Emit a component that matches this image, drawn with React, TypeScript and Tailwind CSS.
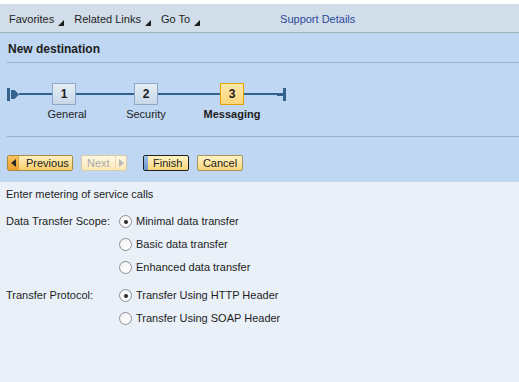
import React from "react";

const font = { fontFamily: '"Liberation Sans", Arial, sans-serif' };

const MenuItem = ({ label }: { label: string }) => (
  <span className="flex items-start text-[11px] leading-[14px] text-[#1d1d1d]">
    {label}
    <svg width="6" height="6" viewBox="0 0 6 6" className="ml-[4px] mt-[8px]">
      <polygon points="6,0 6,6 0,6" fill="#1d1d1d" />
    </svg>
  </span>
);

const Step = ({ n, label, active, shift }: { n: number; label: string; active?: boolean; shift?: string }) => (
  <div className="relative shrink-0">
    <div
      className={
        active
          ? "w-[24px] h-[22px] border border-[#e2a400] bg-gradient-to-b from-[#fce7a8] to-[#f9d57a] flex items-center justify-center text-[12px] font-bold text-[#1d1d1d]"
          : "w-[24px] h-[22px] border border-[#8ea9c6] bg-gradient-to-b from-[#e6eef6] to-[#c8d8e9] flex items-center justify-center text-[12px] font-bold text-[#1d1d1d]"
      }
    >
      {n}
    </div>
    <div
      className={
        "absolute top-full left-1/2 -translate-x-1/2 mt-[2px] whitespace-nowrap text-[11px] leading-[14px] text-[#1d1d1d] " +
        (shift ?? "") +
        (active ? " font-bold" : "")
      }
    >
      {label}
    </div>
  </div>
);

const Line = ({ w }: { w: string }) => <div className={`h-[2px] bg-[#33628f] ${w}`} />;

const Radio = ({ label, checked }: { label: string; checked?: boolean }) => (
  <div className="h-[23px] flex items-center">
    <span className="w-[13px] h-[13px] rounded-full border border-[#8b9097] bg-gradient-to-br from-[#f2f2f2] to-[#ffffff] flex items-center justify-center">
      {checked && <span className="w-[4px] h-[4px] rounded-full bg-[#2a2a2a]" />}
    </span>
    <span className="ml-[4px] text-[11px] text-[#1d1d1d]">{label}</span>
  </div>
);

export default function App() {
  return (
    <div className="w-[519px] h-[382px] overflow-hidden bg-[#e9f0f8]" style={font}>
      <div className="h-[4px] bg-white" />
      {/* toolbar */}
      <div className="h-[29px] bg-[#d1dde8] border-b border-[#a3b1bf] flex pl-[9px] pt-[8px]">
        <div className="flex gap-[10px]">
          <MenuItem label="Favorites" />
          <MenuItem label="Related Links" />
          <MenuItem label="Go To" />
        </div>
        <span className="ml-[80px] text-[11px] leading-[14px] text-[#2b4a9c]">Support Details</span>
      </div>

      {/* wizard header */}
      <div className="bg-[#bfd7f3]">
        <div className="ml-[7px] h-[30px] border-b border-[#96aecb] flex items-center pl-[1px] pt-[2px]">
          <span className="text-[12px] font-bold text-[#1d1d1d]">New destination</span>
        </div>

        <div className="ml-[7px] h-[74px] border-b border-[#96aecb] pt-[20px]">
          <div className="flex items-center h-[22px]">
            <svg width="12" height="13" viewBox="0 0 12 13" className="shrink-0">
              <rect x="0" y="0" width="3" height="13" fill="#33628f" />
              <polygon points="4,2 7.5,2 12,6.5 7.5,11 4,11" fill="#33628f" />
            </svg>
            <Line w="w-[33px]" />
            <Step n={1} label="General" shift="ml-[3px]" />
            <Line w="w-[58px]" />
            <Step n={2} label="Security" />
            <Line w="w-[62px]" />
            <Step n={3} label="Messaging" active />
            <Line w="w-[34px]" />
            <svg width="9" height="13" viewBox="0 0 9 13" className="-ml-[1px] shrink-0">
              <rect x="0" y="5" width="7" height="3" fill="#33628f" />
              <rect x="6" y="0" width="3" height="13" fill="#33628f" />
            </svg>
          </div>
        </div>

        {/* buttons */}
        <div className="ml-[7px] h-[45px] pt-[18px] flex items-start text-[11px]">
          <button className="w-[66px] h-[16px] rounded-[2px] border border-[#a98a45] bg-gradient-to-b from-[#fff0c0] to-[#f7cd68] flex items-center text-[#1d1d1d] overflow-hidden">
            <span className="w-[11px] h-full flex items-center justify-center border-r border-[#d9a94a] bg-gradient-to-b from-[#f8c45a] to-[#ee9f2a]">
              <svg width="5" height="8" viewBox="0 0 5 8">
                <polygon points="5,0 5,8 0,4" fill="#2a2a2a" />
              </svg>
            </span>
            <span className="ml-[7px]">Previous</span>
          </button>
          <button className="ml-[8px] w-[46px] h-[16px] rounded-[2px] border border-[#dccaa3] bg-gradient-to-b from-[#fff8e2] to-[#fbe8b8] flex items-center text-[#a9a9a9]">
            <span className="ml-[5px]">Next</span>
            <span className="ml-auto w-[11px] h-full flex items-center justify-center border-l border-[#ecdcb4]">
              <svg width="5" height="8" viewBox="0 0 5 8">
                <polygon points="0,0 5,4 0,8" fill="#b9b9b9" />
              </svg>
            </span>
          </button>
          <button className="ml-[16px] w-[46px] h-[16px] rounded-[2px] border border-[#1f1f1f] bg-gradient-to-b from-[#fff3c4] to-[#f8d67a] flex items-center text-[#1d1d1d] overflow-hidden">
            <span className="w-[4px] h-full bg-gradient-to-b from-[#9cc0ea] to-[#6d98cc]" />
            <span className="ml-[5px]">Finish</span>
          </button>
          <button className="ml-[8px] w-[46px] h-[16px] rounded-[2px] border border-[#a8915a] bg-gradient-to-b from-[#fff3c4] to-[#f8d67a] flex items-center justify-center text-[#1d1d1d]">
            Cancel
          </button>
        </div>
      </div>

      {/* content */}
      <div className="px-[6px] pt-[5px] text-[11px] text-[#1d1d1d]">
        <div className="h-[14px] leading-[14px]">Enter metering of service calls</div>
        <div className="mt-[9px] grid grid-cols-[113px_1fr]">
          <div className="h-[23px] flex items-center">Data Transfer Scope:</div>
          <div>
            <Radio label="Minimal data transfer" checked />
            <Radio label="Basic data transfer" />
            <Radio label="Enhanced data transfer" />
          </div>
        </div>
        <div className="mt-[5px] grid grid-cols-[113px_1fr]">
          <div className="h-[23px] flex items-center">Transfer Protocol:</div>
          <div>
            <Radio label="Transfer Using HTTP Header" checked />
            <Radio label="Transfer Using SOAP Header" />
          </div>
        </div>
      </div>
    </div>
  );
}
